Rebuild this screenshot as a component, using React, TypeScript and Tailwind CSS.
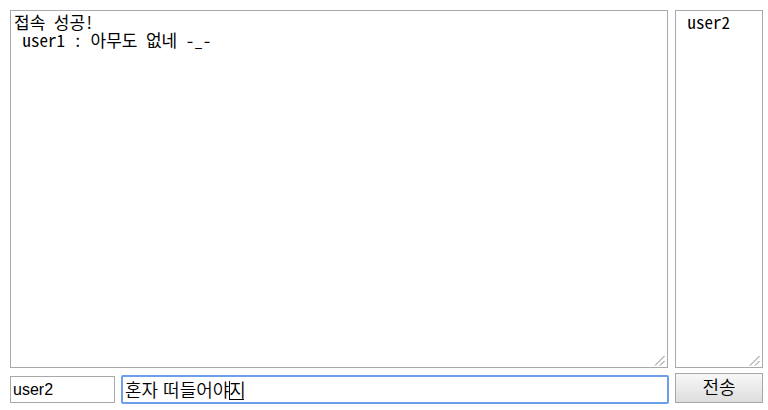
import { useState } from "react";

const fieldFont = "font-['Liberation_Sans','Noto_Sans_CJK_KR',sans-serif]";

function LogArea({ label, text, className }: { label: string; text: string; className: string }) {
  return (
    <div className={`relative ${className}`}>
      <textarea
        aria-label={label}
        readOnly
        className="block h-[358px] w-full resize overflow-auto border border-[#a9a9a9] bg-white px-[3px] py-0.5 font-['Noto_Sans_Mono_CJK_KR','Liberation_Mono','Noto_Sans_CJK_KR',monospace] text-[17px] leading-[18px] outline-none [&::-webkit-resizer]:bg-transparent"
        defaultValue={text}
      />
      <svg
        aria-hidden="true"
        viewBox="0 0 12 12"
        className="pointer-events-none absolute right-0.5 bottom-0.5 size-3"
        fill="none"
        stroke="#808080"
      >
        <path d="M1 11.5L10.5 2M6 11.5L10.5 7" />
      </svg>
    </div>
  );
}

export default function App() {
  const [name, setName] = useState("user2");
  const [message, setMessage] = useState("혼자 떠들어야지");

  return (
    <main className="flex flex-col gap-[5px] bg-white pt-2.5 pr-[5px] pb-1.5 pl-2.5 text-black">
      <div className="flex gap-[7px]">
        <LogArea
          label="대화 내용"
          text={"접속 성공!\n user1 : 아무도 없네 -_-"}
          className="min-w-0 flex-1"
        />
        <LogArea label="접속자" text=" user2" className="w-[88px]" />
      </div>
      <form className="flex items-start gap-1.5" onSubmit={(e) => e.preventDefault()}>
        <input
          aria-label="이름"
          value={name}
          onChange={(e) => setName(e.target.value)}
          className={`${fieldFont} mt-[3px] h-[27px] w-[105px] border border-[#a9a9a9] bg-white px-0.5 text-[16px] outline-none`}
        />
        <div className="relative mt-0.5 min-w-0 flex-1">
          <input
            aria-label="메시지"
            value={message}
            onChange={(e) => setMessage(e.target.value)}
            className={`${fieldFont} block h-[29px] w-full rounded-[2px] border-2 border-[#6b9fec] bg-white px-0.5 pb-0.5 text-[18px] font-[350] outline-none`}
          />
          <span className="pointer-events-none absolute top-1.5 left-[108px] h-[19px] w-[15px] border-b border-l border-black" />
        </div>
        <button
          type="submit"
          className={`${fieldFont} h-[30px] w-[88px] border border-[#a6a6a6] bg-linear-to-b from-[#f8f8f8] to-[#dddddd] text-[18px] leading-none font-[350]`}
        >
          전송
        </button>
      </form>
    </main>
  );
}
